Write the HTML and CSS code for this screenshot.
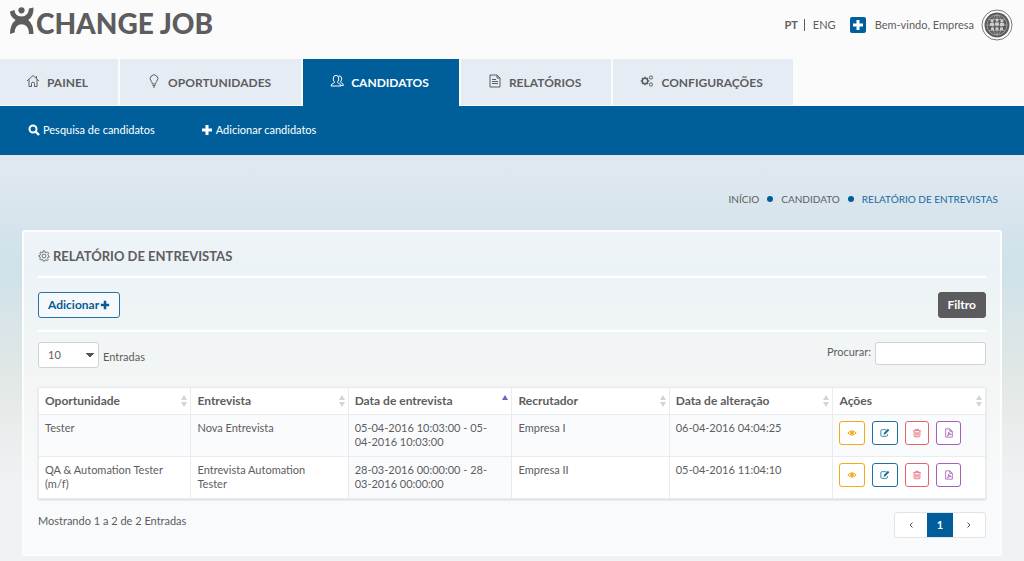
FILE: index.html
```html
<!DOCTYPE html>
<html lang="pt">
<head>
<meta charset="utf-8">
<meta name="viewport" content="width=device-width, initial-scale=1">
<title>Xchange Job - Relatório de Entrevistas</title>
<link rel="stylesheet" href="styles.css">
</head>
<body>
<svg class="sprite" aria-hidden="true">
  <symbol id="plus" viewBox="0 0 12 12"><path d="M4.500 1h3v3.500H11v3H7.500V11h-3V7.500H1v-3h3.500z" fill="currentColor"/></symbol>
  <symbol id="eye" viewBox="0 0 12 12"><path d="M1 6Q6 .8 11 6Q6 11 1 6z" fill="none" stroke="currentColor" stroke-width="1.200"/><circle cx="6" cy="5.800" r="2.300" fill="currentColor"/></symbol>
  <symbol id="edit" viewBox="0 0 12 12"><path d="M7.500 2H2.500Q1 2 1 3.500v5Q1 10 2.500 10h5Q9 10 9 8.500V7.500" fill="none" stroke="currentColor"/><path d="M9.500 1l1.700 1.700L6.500 7.500l-2.200.5.500-2.200z" fill="currentColor"/></symbol>
  <symbol id="trash" viewBox="0 0 12 12"><path d="M1.500 3.200h9M4.200 3V1.600h3.600V3M2.500 3.500v6q0 1 1 1h5q1 0 1-1v-6M4.500 5v4M6 5v4M7.500 5v4" fill="none" stroke="currentColor"/></symbol>
  <symbol id="pdf" viewBox="0 0 12 12"><path d="M2 1h5l3 3v7H2zM7 1v3h3M4 9.500Q6 7.500 5.500 5Q6.500 7.800 8.800 7.800Q6 7.500 4 9.500" fill="none" stroke="currentColor"/></symbol>
</svg>
<header class="top">
  <a class="logo" href="#" aria-label="Xchange Job">
    <svg class="logo-mark" viewBox="0 0 24 28" aria-hidden="true"><circle cx="11.500" cy="3.300" r="3.100"/><path d="M0 4.500L4.500 3Q5 9.200 11.500 9.600Q18.500 9.200 19 1.500L23.500.5Q24 9 18.200 13Q23.500 17 23.500 27H19Q18.800 17.500 11.800 17.300Q5 17.500 4.600 25.500L0 27Q0 17.500 5.600 13Q0 10 0 4.500z"/></svg>
    <span>CHANGE JOB</span>
  </a>
  <div class="user">
    <a class="lang current" href="#">PT</a><a class="lang" href="#">ENG</a>
    <button class="add" aria-label="Adicionar"><svg><use href="#plus"/></svg></button>
    <span class="welcome">Bem-vindo, Empresa</span>
    <svg class="avatar" viewBox="0 0 32 32" aria-hidden="true"><circle cx="16" cy="16" r="15" fill="#fff" stroke="#777"/><circle cx="16" cy="16" r="12.500" fill="#5b5b5d"/><g fill="none" stroke="#aaa" stroke-width=".8"><circle cx="16" cy="16" r="10"/><ellipse cx="16" cy="16" rx="4.500" ry="10"/><path d="M6 16h20M16 6v20M8 10.500h16M8 21.500h16"/></g><g fill="#ccc"><circle cx="11" cy="12" r="1.500"/><circle cx="16" cy="11" r="1.500"/><circle cx="21" cy="12" r="1.500"/><path d="M9 14h4v3H9zM14 13.500h4v3h-4zM19 14h4v3h-4zM10 18.500h3v2.500h-3zM14.500 18.500h3v2.500h-3zM19 18.500h3v2.500h-3z"/></g></svg>
  </div>
</header>
<nav class="tabs" aria-label="Principal">
  <a href="#"><svg viewBox="0 0 14 14"><path d="M1 7l6-5.500L13 7M3 5.500V12.500h2.500v-3q0-1.300 1.500-1.300t1.500 1.300v3H11V5.500M10.500 4V2"/></svg>PAINEL</a>
  <a href="#"><svg viewBox="0 0 14 14"><path d="M5.300 10Q5.300 8.300 4.200 7.200A3.800 3.800 0 1 1 9.800 7.200Q8.700 8.300 8.700 10zM5.500 11.500h3M6 13h2"/></svg>OPORTUNIDADES</a>
  <a class="active" href="#" aria-current="page"><svg viewBox="0 0 14 14"><path d="M1 12Q1 10 3.500 9.300Q5 8.800 4.200 7.700Q3 6 3.300 4Q3.700 1.300 6 1.300T8.700 4Q9 6 7.800 7.700Q7 8.800 8.500 9.300Q11 10 11 12zM8.500 2Q11.200 1.300 11.600 4Q11.900 6 10.800 7.200Q10 8.400 11.500 8.900Q13.300 9.500 13.300 11.500H11"/></svg>CANDIDATOS</a>
  <a href="#"><svg viewBox="0 0 14 14"><path d="M2 1h7l3 3v9H2zM9 1v3h3M4 5.500h4M4 7.500h6M4 9.500h6"/></svg>RELATÓRIOS</a>
  <a href="#"><svg viewBox="0 0 14 14"><circle cx="5" cy="7" r="2.700" stroke-width="1.500"/><path d="M5 2.700v1.500M5 9.800v1.500M.7 7h1.500M7.800 7h1.500M2 4l1 1M7 9l1 1M2 10l1-1M7 5l1-1" stroke-width="1.500"/><circle cx="11" cy="3.500" r="1.600"/><circle cx="11" cy="10.500" r="1.600"/></svg>CONFIGURAÇÕES</a>
</nav>
<nav class="subnav" aria-label="Candidatos">
  <a href="#"><svg viewBox="0 0 12 12"><circle cx="5" cy="5" r="3.500" fill="none" stroke="currentColor" stroke-width="2"/><path d="M7.500 7.500L11 11" stroke="currentColor" stroke-width="2.400"/></svg>Pesquisa de candidatos</a>
  <a href="#"><svg><use href="#plus"/></svg>Adicionar candidatos</a>
</nav>
<main>
  <ol class="crumbs">
    <li><a href="#">INÍCIO</a></li><li><a href="#">CANDIDATO</a></li><li class="here">RELATÓRIO DE ENTREVISTAS</li>
  </ol>
  <section class="panel">
    <h1><svg viewBox="0 0 14 14"><path d="M6 1h2l.4 1.700 1.200.5 1.500-.9 1.300 1.400-.9 1.500.5 1.200L13 7v1l-1.300.4-.6 1.200.9 1.500-1.400 1.300-1.500-.9-1.100.5L7.700 13H6.300L5.900 11.500l-1.200-.5-1.500.9L2 10.600l.8-1.500-.5-1.200L1 7.500v-1l1.500-.4.500-1.200-.9-1.500 1.300-1.200 1.500.9 1-.4z"/><circle cx="7" cy="7" r="2.300"/></svg>RELATÓRIO DE ENTREVISTAS</h1>
    <div class="actions">
      <button class="btn outline">Adicionar<svg><use href="#plus"/></svg></button>
      <button class="btn dark">Filtro</button>
    </div>
    <div class="controls">
      <div class="length"><select id="len"><option>10</option><option>25</option><option>50</option></select><label for="len">Entradas</label></div>
      <div class="search"><label for="q">Procurar:</label><input id="q" type="text"></div>
    </div>
    <table>
      <colgroup><col class="c-a"><col class="c-b"><col class="c-c"><col class="c-b"><col class="c-c"><col class="c-a"></colgroup>
      <thead><tr>
        <th><div>Oportunidade<i class="sort"></i></div></th><th><div>Entrevista<i class="sort"></i></div></th><th aria-sort="ascending"><div>Data de entrevista<i class="sort asc"></i></div></th><th><div>Recrutador<i class="sort"></i></div></th><th><div>Data de alteração<i class="sort"></i></div></th><th><div>Ações<i class="sort"></i></div></th>
      </tr></thead>
      <tbody>
        <tr><td>Tester</td><td>Nova Entrevista</td><td>05-04-2016 10:03:00 - 05-04-2016 10:03:00</td><td>Empresa I</td><td>06-04-2016 04:04:25</td>
          <td><div class="tools"><button class="view" aria-label="Ver"><svg><use href="#eye"/></svg></button><button class="edit" aria-label="Editar"><svg><use href="#edit"/></svg></button><button class="delete" aria-label="Apagar"><svg><use href="#trash"/></svg></button><button class="pdf" aria-label="PDF"><svg><use href="#pdf"/></svg></button></div></td></tr>
        <tr><td>QA &amp; Automation Tester (m/f)</td><td>Entrevista Automation Tester</td><td>28-03-2016 00:00:00 - 28-03-2016 00:00:00</td><td>Empresa II</td><td>05-04-2016 11:04:10</td>
          <td><div class="tools"><button class="view" aria-label="Ver"><svg><use href="#eye"/></svg></button><button class="edit" aria-label="Editar"><svg><use href="#edit"/></svg></button><button class="delete" aria-label="Apagar"><svg><use href="#trash"/></svg></button><button class="pdf" aria-label="PDF"><svg><use href="#pdf"/></svg></button></div></td></tr>
      </tbody>
    </table>
    <div class="foot">
      <span>Mostrando 1 a 2 de 2 Entradas</span>
      <div class="pager"><button aria-label="Anterior"><svg viewBox="0 0 8 8"><path d="M5.500 1.500L3 4l2.500 2.500"/></svg></button><button class="on">1</button><button aria-label="Seguinte"><svg viewBox="0 0 8 8"><path d="M2.500 1.500L5 4 2.500 6.500"/></svg></button></div>
    </div>
  </section>
</main>
</body>
</html>
```
FILE: styles.css
```css
* { box-sizing: border-box; }
body { margin: 0; min-height: 100vh; display: flex; flex-direction: column; font: 11px/14px Lato, "Liberation Sans", sans-serif; color: #5d5d60; background: #fbfbfc; }
a { color: inherit; text-decoration: none; }
button, input, select { font: inherit; color: inherit; }
button { cursor: pointer; padding: 0; }
svg { width: 12px; height: 12px; flex: none; }
.sprite { position: absolute; width: 0; height: 0; }

.top { display: flex; justify-content: space-between; align-items: flex-start; height: 59px; padding: 7px 11px 0 10px; }
.logo { display: flex; align-items: flex-start; gap: 2px; color: #5d5d5f; font-size: 28px; line-height: 32px; font-weight: 900; }
.logo-mark { width: 24px; height: 28px; fill: currentColor; }
.user { display: flex; align-items: center; height: 36px; }
.lang + .lang { margin-left: 6px; padding-left: 8px; line-height: 12px; border-left: 1px solid #5d5d60; }
.current { font-weight: 700; }
.add { display: flex; align-items: center; justify-content: center; width: 16px; height: 16px; margin: 0 9px 0 14px; border: 0; border-radius: 2px; background: #005f9b; color: #fff; }
.avatar { width: 32px; height: 32px; margin-left: 7px; }

.tabs { display: flex; gap: 2px; height: 47px; }
.tabs a { display: flex; align-items: center; gap: 7px; padding: 1px 30px 0 27px; border-bottom: 1px solid #fbfbfc; background: #e6ecf4; font-size: 12px; font-weight: 700; }
.tabs a:first-child { padding-left: 26px; }
.tabs svg { width: 14px; height: 14px; margin-bottom: 4px; fill: none; stroke: currentColor; }
.tabs .active { border-color: #005f9b; background: #005f9b; color: #fff; }
.subnav { display: flex; align-items: center; gap: 46px; height: 49px; padding: 0 28px 2px; background: #005f9b; color: #fff; }
.subnav a { display: flex; align-items: center; gap: 3px; }

main { flex: 1; padding: 37px 22px 5px; background: linear-gradient(#e1e9ef 0, #cfe1ea 112px, #e2e8e5 225px, #f0f2f4 330px, #f1f2f4 100%); }
.crumbs { display: flex; justify-content: flex-end; margin: 0 4px 24px 0; padding: 0; list-style: none; font-size: 10px; }
.crumbs li { display: flex; align-items: center; }
.crumbs li + li::before { content: ""; width: 6px; height: 6px; margin: 0 8px; border-radius: 50%; background: #005f9b; }
.here { color: #1769a3; }
.panel { padding: 14px 14px 16px; border: 2px solid #fcfdfe; border-radius: 3px; background: rgba(255, 255, 255, .6); }
h1 { display: flex; align-items: center; gap: 3px; height: 32px; margin: 0; padding-bottom: 11px; border-bottom: 2px solid #fff; font-size: 13px; font-weight: 700; }
h1 svg { width: 12px; height: 12px; fill: none; stroke: currentColor; }
.actions { display: flex; justify-content: space-between; padding: 14px 0 12px; border-bottom: 2px solid #fff; }
.btn { display: flex; align-items: center; gap: 1px; height: 26px; padding: 0 9px; border: 1px solid #2873a5; border-radius: 3px; font-size: 12px; font-weight: 700; }
.btn svg { width: 10px; height: 10px; }
.outline { background: #f6f9fb; color: #095994; }
.dark { border-color: #5c5c5e; background: #5c5c5e; color: #fff; }
.controls { display: flex; justify-content: space-between; align-items: flex-start; padding: 10px 0 19px; }
.length, .search { display: flex; gap: 4px; }
.length label { padding-top: 8px; }
.search label { padding-top: 3px; }
select { width: 61px; height: 26px; padding: 0 9px; appearance: none; border: 1px solid #cfd3d8; border-radius: 3px; background: conic-gradient(from -45deg at 50% 100%, #555 90deg, transparent 0) right 4px center / 8px 4px no-repeat #fff; }
input { width: 111px; height: 23px; padding: 0 6px; border: 1px solid #cfd3d8; border-radius: 3px; background: #fff; }

table { width: 100%; table-layout: fixed; border-collapse: collapse; background: #fff; box-shadow: 0 1px 2px #d5d8dc; }
.c-a { width: 16.1%; }
.c-b { width: 16.6%; }
.c-c { width: 17.3%; }
th, td { padding: 6px; border: 1px solid #e9ebef; text-align: left; vertical-align: top; }
th { height: 27px; padding-right: 3px; font-size: 12px; font-weight: 700; }
th div { display: flex; justify-content: space-between; align-items: center; }
td { height: 42px; padding-right: 20px; }
td:last-child { padding-right: 6px; }
tbody tr:first-child, td:nth-child(3) { background: #fafbfd; }
.sort { display: grid; gap: 2px; }
.sort::before, .sort::after { content: ""; border: 3px solid transparent; }
.sort::before { border-top: 0; border-bottom: 5px solid #d2d4d8; }
.sort::after { border-bottom: 0; border-top: 5px solid #d2d4d8; }
.sort.asc::before { border-bottom-color: #6c63c4; }
.sort.asc::after { border-top-color: transparent; }
.tools { display: flex; gap: 7px; }
.tools button { display: flex; align-items: center; justify-content: center; width: 25px; height: 24px; border: 1px solid; border-radius: 3px; background: #fff; }
.tools svg { width: 10px; height: 10px; }
.tools .view, .tools .edit { width: 26px; }
.tools .view { color: #f5a81c; }
.tools .edit { color: #1f6f9f; }
.tools .delete { width: 24px; color: #e2636d; }
.tools .pdf { color: #a55fbd; }
.foot { display: flex; justify-content: space-between; padding-top: 13px; }
.foot > span { padding-top: 2px; }
.pager { display: flex; border: 1px solid #e1e3e8; border-radius: 3px; background: #fff; }
.pager button { width: 32px; height: 24px; border: 0; background: none; }
.pager svg { width: 8px; height: 8px; fill: none; stroke: #555; }
.pager .on { width: 26px; background: #005f9b; color: #fff; font-weight: 700; }
```
